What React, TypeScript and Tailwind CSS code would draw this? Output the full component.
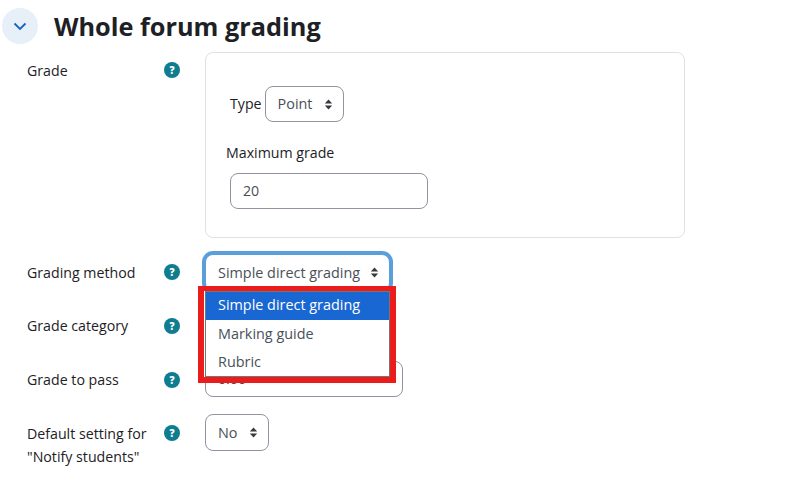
const font = { fontFamily: '"Open Sans", "Noto Sans", sans-serif' };

function Help() {
  return (
    <span className="w-[16px] h-[16px] rounded-full bg-[#0f7d8f] text-white flex items-center justify-center text-[10px] font-extrabold leading-none">?</span>
  );
}

function Arrows() {
  return (
    <svg width="9" height="11" viewBox="0 0 9 11" className="shrink-0">
      <path d="M4.5 0.5 L8.2 4.4 H0.8 Z M4.5 10.5 L8.2 6.6 H0.8 Z" fill="#343a40" />
    </svg>
  );
}

function Select({ text, cls }: { text: string; cls: string }) {
  return (
    <div className={`flex items-center justify-between border rounded-[8px] bg-white text-[#495057] text-[14.4px] pl-[12px] pr-[10px] ${cls}`}>
      <span>{text}</span>
      <Arrows />
    </div>
  );
}

function Row({ label, labelCls, children, cls }: { label: React.ReactNode; labelCls?: string; children?: React.ReactNode; cls: string }) {
  return (
    <div className={`flex items-start ${cls}`}>
      <div className={`w-[137px] shrink-0 text-[#1d2125] ${labelCls ?? "leading-[27px]"}`}>{label}</div>
      <div className="w-[41px] shrink-0 pt-[5px]"><Help /></div>
      <div>{children}</div>
    </div>
  );
}

export default function App() {
  return (
    <div className="relative w-[787px] h-[486px] bg-white overflow-hidden text-[14.2px]" style={font}>
      <div className="flex items-center h-[36px] mt-[8px] absolute left-[2px] top-0">
        <div className="w-[36px] h-[36px] rounded-full bg-[#e7eff8] flex items-center justify-center">
          <svg width="14" height="9" viewBox="0 0 14 9" fill="none">
            <path d="M1.5 1.5 L7 7 L12.5 1.5" stroke="#1565c0" strokeWidth="1.8" />
          </svg>
        </div>
        <h2 className="ml-[16px] text-[25.3px] font-bold text-[#1d2125] leading-[36px]">Whole forum grading</h2>
      </div>

      <div className="pl-[27px] pt-[52px]">
        <Row label="Grade" cls="h-[186px] pt-[5px]">
          <div className="-mt-[5px] w-[480px] h-[186px] border border-[#dee2e6] rounded-[8px] pl-[24px] pt-[33px]">
            <div className="flex items-center">
              <span className="text-[#1d2125] mr-[3px]">Type</span>
              <Select text="Point" cls="w-[79px] h-[36px] border-[#8f959e]" />
            </div>
            <div className="-ml-[4px] mt-[19px] text-[#1d2125] leading-[24px]">Maximum grade</div>
            <div className="mt-[8px] w-[198px] h-[36px] border border-[#8f959e] rounded-[8px] text-[#495057] pl-[12px] leading-[34px]">20</div>
          </div>
        </Row>
        <Row label="Grading method" cls="mt-[16px] pt-[5px] h-[32px]">
          <div className="-mt-[5px]">
            <Select text="Simple direct grading" cls="w-[185px] h-[37px] border-[#5a9fdb] shadow-[0_0_0_3px_#5a9fdb]" />
          </div>
        </Row>
        <Row label="Grade category" labelCls="leading-[26px]" cls="mt-[27px] h-[27px]" />
        <Row label="Grade to pass" labelCls="leading-[26px]" cls="mt-[27px] h-[27px]">
          <div className="-mt-[6px] w-[198px] h-[36px] border border-[#8f959e] rounded-[8px] text-[#495057] pl-[12px] leading-[34px]">0.00</div>
        </Row>
        <Row label={<>Default setting for<br />"Notify students"</>} labelCls="leading-[23px] pt-[2px]" cls="mt-[26px]">
          <div className="-mt-[6px]">
            <Select text="No" cls="w-[64px] h-[37px] border-[#8f959e]" />
          </div>
        </Row>
      </div>

      <div className="absolute left-[198px] top-[286px] w-[198px] h-[97px] border-x-[6px] border-t-[5px] border-b-[6px] border-[#ea1c1c] pl-[1px]">
        <div className="w-[185px] h-[86px] bg-white border border-[#767676] text-[#495057] text-[14.4px]">
          <div className="bg-[#1967d2] text-white h-[28px] leading-[26px] pl-[12px]">Simple direct grading</div>
          <div className="h-[28px] leading-[27px] pl-[12px]">Marking guide</div>
          <div className="h-[28px] leading-[27px] pl-[12px]">Rubric</div>
        </div>
      </div>
    </div>
  );
}
